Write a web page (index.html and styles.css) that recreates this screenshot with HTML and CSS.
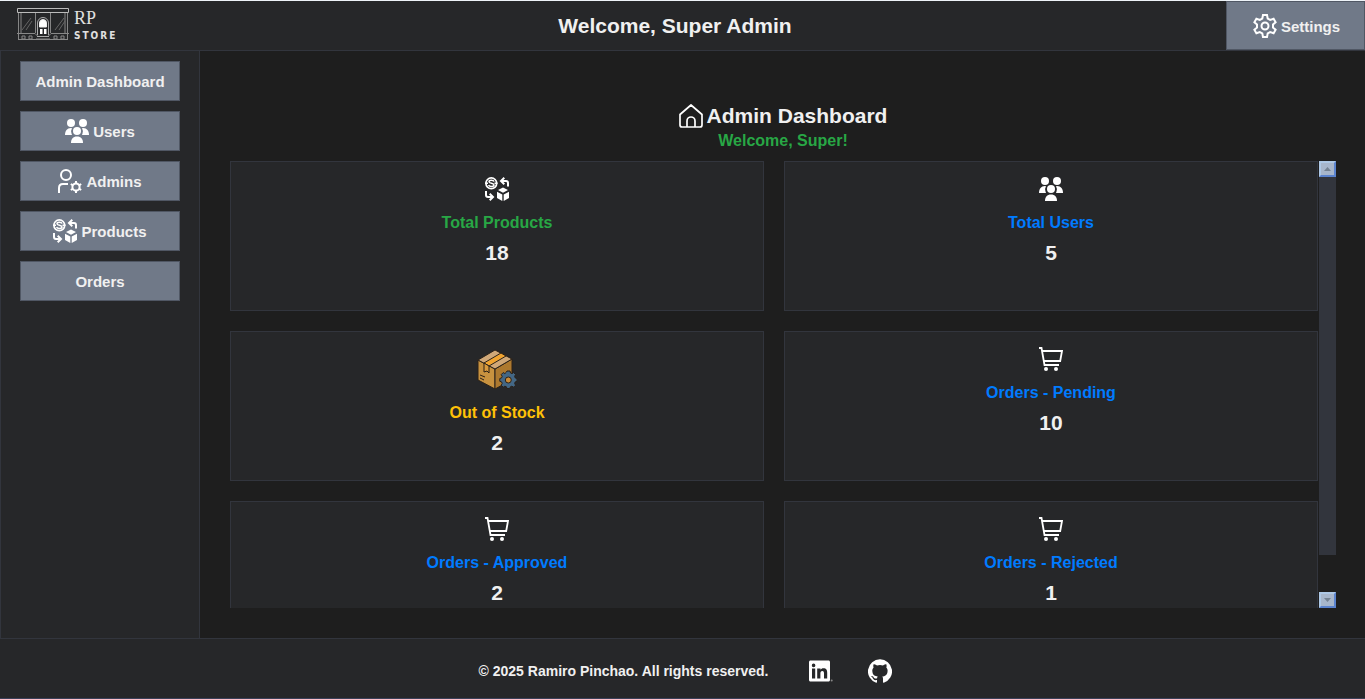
FILE: index.html
```html
<!DOCTYPE html>
<html lang="en">
<head>
<meta charset="utf-8">
<meta name="viewport" content="width=device-width, initial-scale=1">
<title>Admin Dashboard</title>
<link rel="stylesheet" href="styles.css">
</head>
<body>
<svg class="sprite" aria-hidden="true">
  <symbol id="users" viewBox="0 0 24 24">
    <g fill="currentColor"><circle cx="6" cy="4" r="4"/><circle cx="18" cy="4" r="4"/><circle cx="12" cy="12" r="4"/>
    <path d="M0 16c0-4 2-7 6-7l1 .2a6 6 0 0 0-.5 5.300L7 16zM24 16c0-4-2-7-6-7l-1 .2a6 6 0 0 1 .5 5.300L17 16zM6 24c0-4 2-6.500 6-6.500s6 2.500 6 6.500z"/></g>
  </symbol>
  <symbol id="admin" viewBox="0 0 24 24">
    <g fill="none" stroke="currentColor" stroke-width="2"><circle cx="8" cy="6" r="5"/><path d="M1 24v-5c0-2.500 1.500-4 4-4h5"/><circle cx="18" cy="18" r="3.600"/>
    <path d="M18 12v2.500M18 21.500V24M12.800 15l2.200 1.300M21 19.700l2.200 1.300M12.800 21l2.200-1.300M21 16.300l2.200-1.300"/></g>
  </symbol>
  <symbol id="products" viewBox="0 0 24 24">
    <g fill="none" stroke="currentColor" stroke-width="1.700"><circle cx="6.300" cy="6.300" r="5.400"/>
    <path d="M9 4.700C8.500 2.600 4 2.800 4 4.700c0 2 5 1.200 5 3.300 0 2-4.800 2-5.400 0M0 6.300h3M9.500 6.300h3" stroke-width="1.500"/>
    <path d="M23 9.500V6c0-1.200-.8-2-2-2h-4M19.300.8 16 4l3.300 3.200M1 14v4c0 1.200.8 2 2 2h4M4.700 16.800 8 20l-3.300 3.200" stroke-width="2"/></g>
    <g fill="currentColor"><path d="m18 10.500 5 2.600-5 2.700-5-2.700zM12 14.800l5.300 2.800V24L12 21zM24 14.800l-5.300 2.800V24l5.300-3z"/></g>
  </symbol>
  <symbol id="cart" viewBox="0 0 24 24">
    <path d="M0 1h2.500L5.500 18H20M3 4h20l-1.800 10H4.800" fill="none" stroke="currentColor" stroke-width="1.800"/>
    <circle cx="7" cy="22" r="2" fill="currentColor"/><circle cx="17" cy="22" r="2" fill="currentColor"/>
  </symbol>
</svg>

<header class="topbar">
  <a class="brand" href="#" aria-label="RP Store">
    <svg class="storefront" viewBox="0 0 52 33" fill="none" stroke="#aaa" aria-hidden="true">
      <path d="M.5.500h51v4H.5z" stroke="#bbb"/>
      <path d="M1.500 5v27M50.500 5v27M4 5v20M48 5v20M18.500 5v20M33.500 5v20" stroke="#858585"/>
      <path d="M0 25.500h18l3 3M52 25.500H34l-3 3M1 31.500h50M19 31h14M5 28h3v3H5zM12 28h3v3h-3zM37 28h3v3h-3zM44 28h3v3h-3z" stroke="#888"/>
      <path d="m5 22 9-12M9 22l6-9M38 22l9-12M42 22l6-9" stroke="#666"/>
      <path d="M20.500 27V15a5.500 5.500 0 0 1 11 0v12"/>
      <path d="M22.500 19v-4a3.500 3.500 0 0 1 7 0v4z" fill="#fff" stroke="#eee"/>
      <path d="M23 21h2.500v5H23zM27 21h2.500v5H27z" fill="#fff" stroke="none"/>
      <path d="M20 28.500h12"/>
    </svg>
    <span class="wordmark"><span class="initials">RP</span><span class="store">STORE</span></span>
  </a>
  <h1 class="heading">Welcome, Super Admin</h1>
  <button class="button settings" type="button">
    <svg class="icon" viewBox="0 0 24 24" fill="none" stroke="currentColor" stroke-width="2" aria-hidden="true">
      <path d="M10 1h4l.7 3.500 2.500 1.400L20.600 4.800l2 3.500L20 10.500v3l2.600 2.200-2 3.500-3.400-1.100-2.500 1.400L14 23h-4l-.7-3.500-2.500-1.400-3.400 1.100-2-3.500L4 13.500v-3L1.400 8.300l2-3.500 3.400 1.100 2.500-1.400z"/><circle cx="12" cy="12" r="3.500"/>
    </svg>
    <span>Settings</span>
  </button>
</header>

<div class="workspace">
  <nav class="sidebar" aria-label="Administration">
    <button class="button" type="button"><span>Admin Dashboard</span></button>
    <button class="button" type="button"><svg class="icon" aria-hidden="true"><use href="#users"/></svg><span>Users</span></button>
    <button class="button" type="button"><svg class="icon" aria-hidden="true"><use href="#admin"/></svg><span>Admins</span></button>
    <button class="button" type="button"><svg class="icon" aria-hidden="true"><use href="#products"/></svg><span>Products</span></button>
    <button class="button" type="button"><span>Orders</span></button>
  </nav>

  <main class="dashboard">
    <h2 class="heading title">
      <svg class="icon" viewBox="0 0 24 24" fill="none" stroke="currentColor" stroke-width="1.700" stroke-linejoin="round" aria-hidden="true"><path d="M1 10.500 12 1l11 9.500V21a2 2 0 0 1-2 2H3a2 2 0 0 1-2-2zM8 23v-6a4 4 0 0 1 8 0v6"/></svg>
      Admin Dashboard
    </h2>
    <p class="greeting">Welcome, Super!</p>
    <div class="scroller">
      <div class="cards">
        <section class="card green"><svg class="icon" aria-hidden="true"><use href="#products"/></svg><h3 class="label">Total Products</h3><p class="count">18</p></section>
        <section class="card blue"><svg class="icon" aria-hidden="true"><use href="#users"/></svg><h3 class="label">Total Users</h3><p class="count">5</p></section>
        <section class="card amber">
          <svg class="parcel" viewBox="0 0 40 40" stroke="#2a2118" stroke-width="1" stroke-linejoin="round" aria-hidden="true">
            <path d="m1 11 17 9v20L1 31z" fill="#c8923f"/><path d="m18 20 17-10v21l-17 9z" fill="#ad792f"/>
            <path d="M1 11 18 1l17 9-17 10z" fill="#d0a878"/><path d="m7 14 17-10 5 3-17 10z" fill="#f0a431"/>
            <path d="m7 14 5 3v7l-2-2-3 1z" fill="#d99a3d"/><path d="m3 26 5 2M3 29l4 2" fill="none"/>
            <path d="m29.500 23 .5-1h3l.5 2 1.500.6 1.600-1 2 2-1 1.700.6 1.600 1.800.6v2.800l-1.800.6-.6 1.600 1 1.700-2 2-1.700-1-1.500.6-.6 1.700h-2.800l-.6-1.700-1.500-.6-1.700 1-2-2 1-1.700-.6-1.600-1.800-.6v-2.800l1.800-.6.6-1.600-1-1.700 2-2 1.700 1z" fill="#436785"/>
            <circle cx="31.300" cy="31" r="3" fill="#ca8b37"/>
          </svg>
          <h3 class="label">Out of Stock</h3><p class="count">2</p></section>
        <section class="card blue"><svg class="icon" aria-hidden="true"><use href="#cart"/></svg><h3 class="label">Orders - Pending</h3><p class="count">10</p></section>
        <section class="card blue"><svg class="icon" aria-hidden="true"><use href="#cart"/></svg><h3 class="label">Orders - Approved</h3><p class="count">2</p></section>
        <section class="card blue"><svg class="icon" aria-hidden="true"><use href="#cart"/></svg><h3 class="label">Orders - Rejected</h3><p class="count">1</p></section>
      </div>
      <div class="scrollbar" aria-hidden="true">
        <span class="arrow"><svg viewBox="0 0 7 4"><path d="M0 4h7L3.500 0z"/></svg></span>
        <div class="track"><div class="thumb"></div></div>
        <span class="arrow"><svg viewBox="0 0 7 4"><path d="M0 0h7L3.500 4z"/></svg></span>
      </div>
    </div>
  </main>
</div>

<footer class="footer">
  <p class="copyright">© 2025 Ramiro Pinchao. All rights reserved.</p>
  <a href="#" aria-label="LinkedIn"><svg class="icon" viewBox="0 0 24 24" aria-hidden="true"><path fill="currentColor" fill-rule="evenodd" d="M1.500 1.500h18c.8 0 1.500.7 1.500 1.500v18c0 .8-.7 1.500-1.500 1.500h-18C.7 22.500 0 21.800 0 21V3c0-.8.700-1.500 1.500-1.500zM3 9.500v10h3.200v-10zM4.600 4.600a1.800 1.800 0 1 0 0 3.600 1.800 1.800 0 0 0 0-3.600zM8.200 9.500v10h3.200v-5c0-1.500.5-2.500 1.900-2.500s1.700 1.200 1.700 2.600v4.900h3.200V14c0-3-.8-4.700-3.800-4.700-1.400 0-2.400.7-2.900 1.500V9.500z"/><circle cx="22.700" cy="21.500" r="1" fill="#888"/></svg></a>
  <a href="#" aria-label="GitHub"><svg class="icon" viewBox="0 0 24 24" aria-hidden="true"><path fill="currentColor" d="M12 .3a12 12 0 0 0-3.800 23.400c.6.100.8-.3.800-.6v-2c-3.300.7-4-1.600-4-1.600-.6-1.400-1.400-1.800-1.400-1.800-1-.7.100-.7.100-.7 1.200 0 1.900 1.200 1.900 1.200 1 1.800 2.800 1.300 3.500 1 0-.8.400-1.300.7-1.600-2.700-.3-5.500-1.300-5.500-6 0-1.200.5-2.300 1.300-3.100-.2-.4-.6-1.600 0-3.200 0 0 1-.3 3.400 1.200a11.500 11.500 0 0 1 6 0c2.300-1.500 3.300-1.200 3.300-1.200.6 1.600.2 2.800 0 3.200.9.800 1.300 1.900 1.300 3.200 0 4.600-2.800 5.600-5.500 5.900.5.400.9 1 .9 2.200v3.300c0 .3.100.7.800.6A12 12 0 0 0 12 .3"/></svg></a>
</footer>
</body>
</html>
```
FILE: styles.css
```css
* { box-sizing: border-box; }
body {
  display: flex;
  flex-direction: column;
  height: 100vh;
  margin: 0;
  overflow: hidden;
  border-top: 1px solid #eef3f8;
  border-bottom: 1px solid #3b4058;
  background: #1e1e1e;
  color: #f0f0f0;
  font: bold 14px/20px "Liberation Sans", Arial, sans-serif;
}
h1, h2, h3, p { margin: 0; }
a { color: #fff; text-decoration: none; }
.sprite { display: none; }
.icon { display: block; flex: none; width: 24px; height: 24px; color: #fff; }
.heading { font-size: 21px; line-height: 26px; }
.topbar {
  display: flex;
  flex: none;
  align-items: center;
  justify-content: space-between;
  height: 50px;
  border-bottom: 1px solid #32353d;
  background: #262729;
}
.brand { display: flex; gap: 5px; width: 124px; padding-left: 17px; }
.storefront { width: 52px; height: 33px; }
.wordmark { display: flex; flex-direction: column; }
.initials { font: 18px/20px "Liberation Serif", serif; color: #e0e0e0; }
.store { font: bold 10px/16px "DejaVu Sans Condensed", sans-serif; letter-spacing: 2px; color: #e0e0e0; }
.button {
  display: flex;
  align-items: center;
  justify-content: center;
  gap: 4px;
  height: 40px;
  padding: 0;
  border: 1px solid #505764;
  background: #707988;
  color: #f0f0f0;
  font: inherit;
  font-size: 15px;
}
.button span { padding-top: 2px; }
.button.settings { width: 139px; height: 49px; padding-left: 2px; }
.workspace { display: flex; flex: 1; min-height: 0; }
.sidebar {
  display: flex;
  flex: none;
  flex-direction: column;
  gap: 10px;
  width: 200px;
  padding: 10px 19px;
  border: 1px solid #32353d;
  border-width: 0 1px;
  background: #262729;
}
.dashboard {
  display: flex;
  flex: 1;
  flex-direction: column;
  min-width: 0;
  padding: 52px 29px 30px 30px;
}
.title { display: flex; align-items: center; justify-content: center; gap: 4px; }
.greeting { margin: 2px 0 10px; color: #28a745; font-size: 16px; text-align: center; }
.scroller { display: flex; flex: 1; gap: 1px; min-height: 0; overflow: hidden; }
.cards {
  display: grid;
  flex: 1;
  grid-template-columns: 1fr 1fr;
  grid-auto-rows: 150px;
  gap: 20px;
}
.card {
  display: flex;
  flex-direction: column;
  align-items: center;
  padding-top: 15px;
  border: 1px solid #32353d;
  background: #262729;
}
.parcel { width: 40px; height: 40px; margin: 2px 0 14px; }
.card .icon { margin-bottom: 12px; }
.label { font-size: 16px; line-height: 20px; }
.green .label { color: #28a745; }
.blue .label { color: #007bff; }
.amber .label { color: #ffc107; }
.count { margin-top: 8px; font-size: 21px; line-height: 24px; }
.scrollbar { display: flex; flex-direction: column; width: 17px; }
.arrow {
  display: flex;
  align-items: center;
  justify-content: center;
  height: 16px;
  border: 2px solid;
  border-color: #aec8e5 #5b83ce #5b83ce #aec8e5;
  background: #a7b6cb;
}
.arrow svg { width: 7px; height: 4px; fill: #748292; }
.track { flex: 1; }
.thumb { height: 91%; background: #32353d; }
.footer {
  display: flex;
  flex: none;
  align-items: center;
  justify-content: center;
  gap: 35px;
  height: 60px;
  padding-top: 4px;
  border-top: 1px solid #32353d;
  background: #262729;
}
.copyright { padding: 0 6px; }
```
